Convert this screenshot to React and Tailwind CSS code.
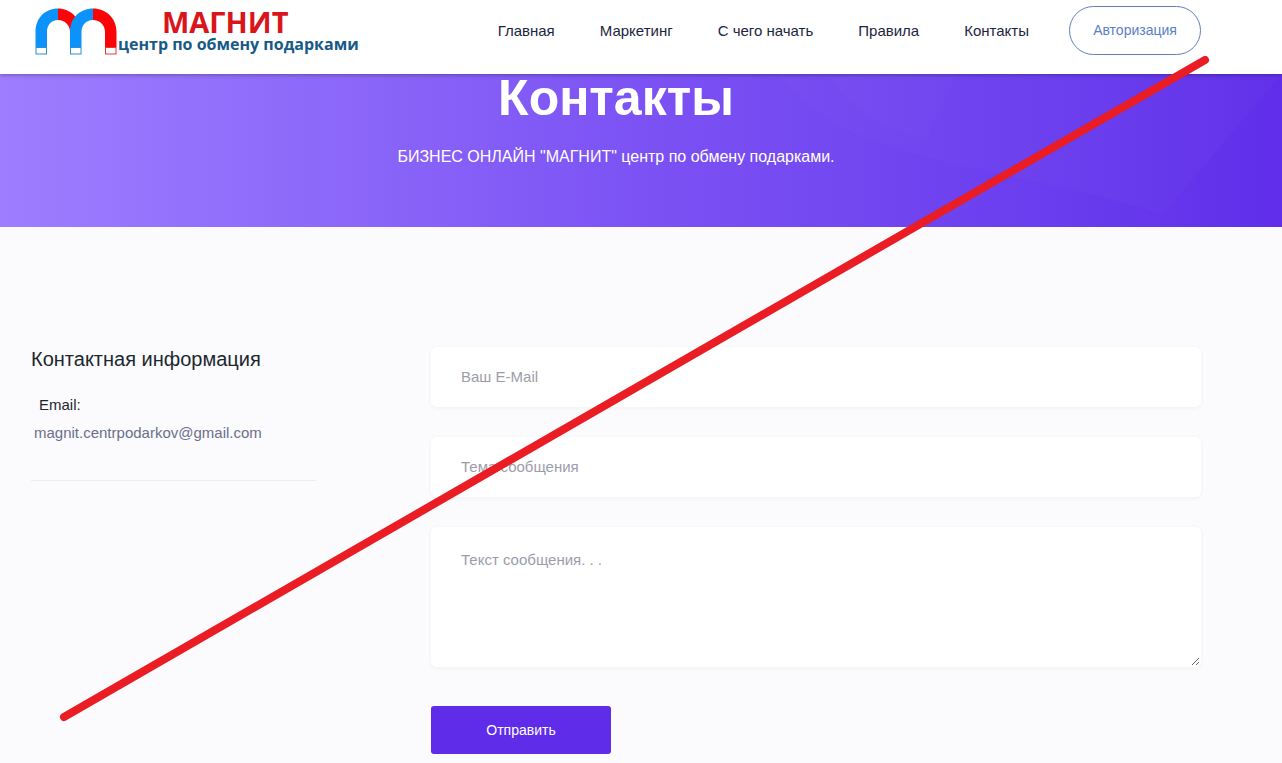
import React, { useState } from 'react'

const NAV_LINKS = [
  { label: 'Главная', href: '#home' },
  { label: 'Маркетинг', href: '#marketing' },
  { label: 'С чего начать', href: '#start' },
  { label: 'Правила', href: '#rules' },
  { label: 'Контакты', href: '#contacts' },
]

const fieldClass =
  'block w-full rounded-[5px] border border-white bg-white px-[29px] text-[15px] text-[#1d2b3a] placeholder-[#9c9dab] shadow-[0_1px_4px_rgba(40,40,90,0.05)] outline-none'

function MagnetLogo() {
  return (
    <svg viewBox="0 0 83 47" className="h-[47px] w-[83px] shrink-0" aria-hidden="true">
      {/* Left magnet */}
      <path d="M0.5 39V24C0.5 10 10 0.5 23 0.5V12C16 12 12 17 12 24V39Z" fill="#0c93fb" />
      <path d="M23 0.5C35 0.5 46 10 46 24H35C35 17 30 12 23 12Z" fill="#fb0407" />
      <rect x="1" y="39.5" width="10.5" height="6.5" fill="#fff" stroke="#2f8fd0" />
      {/* Right magnet */}
      <path d="M35 39V24C35 10 45 0.5 58 0.5V12C51 12 46.5 17 46.5 24V39Z" fill="#0c93fb" />
      <path d="M58 0.5C71 0.5 81.5 10 81.5 24V39H70V24C70 17 65 12 58 12Z" fill="#fb0407" />
      <rect x="35.5" y="39.5" width="10.5" height="6.5" fill="#fff" stroke="#2f8fd0" />
      <rect x="70.5" y="39.5" width="10.5" height="6.5" fill="#fff" stroke="#e03a3a" />
    </svg>
  )
}

function Header() {
  return (
    <header className="relative z-10 flex h-[74px] justify-between bg-white pl-[35px] pr-[81px] shadow-[0_1px_4px_rgba(0,0,0,0.3)]">
      <a href="#home" className="flex pt-2">
        <MagnetLogo />
        <span className="flex flex-col whitespace-nowrap font-['Open_Sans',sans-serif] font-bold">
          <span className="pl-11 text-[29px] leading-7 text-[#d9151b]">МАГНИТ</span>
          <span className="text-base leading-4 text-[#175987]">центр по обмену подарками</span>
        </span>
      </a>
      <div className="flex items-start gap-10 pt-[6px]">
        <nav className="flex h-[51px] items-center gap-[45px]">
          {NAV_LINKS.map((link) => (
            <a key={link.href} href={link.href} className="whitespace-nowrap text-[15px] text-[#1c2540]">
              {link.label}
            </a>
          ))}
        </nav>
        <button
          type="button"
          className="h-[49px] w-[132px] rounded-full border border-[#5f80b8] pb-0.5 text-sm text-[#5a80c8]"
        >
          Авторизация
        </button>
      </div>
    </header>
  )
}

function Banner() {
  return (
    <section className="relative h-[153px] bg-linear-to-r from-[#9f7dff] via-[#7c52f4] to-[#602eea] pl-[31px] pr-[81px] text-center text-white">
      {/* Faint background shapes */}
      <svg
        viewBox="0 0 520 153"
        preserveAspectRatio="none"
        className="absolute inset-y-0 right-0 h-full w-2/5"
        aria-hidden="true"
      >
        <path d="M10 0C50 50 100 70 190 90C260 105 330 120 400 140L520 0Z" fill="#fff" opacity="0.015" />
        <path d="M60 0Q90 50 160 65L190 0Z" fill="#fff" opacity="0.015" />
      </svg>
      <h1 className="relative text-[50px] font-bold leading-[48px]">Контакты</h1>
      <p className="relative mt-[23px] text-base">БИЗНЕС ОНЛАЙН "МАГНИТ" центр по обмену подарками.</p>
    </section>
  )
}

function ContactInfo() {
  return (
    <aside className="w-[285px] shrink-0 self-start border-b border-[#ececf1] pb-[33px]">
      <h2 className="text-xl leading-6 text-[#1d2730]">Контактная информация</h2>
      <p className="mt-5 pl-2 text-[15px] leading-7 text-[#1d2730]">Email:</p>
      <a href="mailto:magnit.centrpodarkov@gmail.com" className="block pl-[3px] text-[15px] leading-7 text-[#6a6f8b]">
        magnit.centrpodarkov@gmail.com
      </a>
    </aside>
  )
}

function ContactForm() {
  const [form, setForm] = useState({ email: '', subject: '', message: '' })

  const handleChange = (e) => {
    setForm({ ...form, [e.target.name]: e.target.value })
  }

  return (
    <form className="flex-1" onSubmit={(e) => e.preventDefault()}>
      <div className="flex flex-col gap-[30px]">
        <input
          type="email"
          name="email"
          aria-label="Ваш E-Mail"
          placeholder="Ваш E-Mail"
          value={form.email}
          onChange={handleChange}
          className={`h-[60px] pb-0.5 ${fieldClass}`}
        />
        <input
          type="text"
          name="subject"
          aria-label="Тема сообщения"
          placeholder="Тема сообщения"
          value={form.subject}
          onChange={handleChange}
          className={`h-[60px] pb-0.5 ${fieldClass}`}
        />
        <textarea
          name="message"
          aria-label="Текст сообщения"
          placeholder="Текст сообщения. . ."
          value={form.message}
          onChange={handleChange}
          className={`h-[140px] resize pt-5 leading-6 ${fieldClass}`}
        />
      </div>
      <button type="submit" className="mt-[39px] h-12 w-[180px] rounded-[3px] bg-[#5f2cea] text-sm text-white">
        Отправить
      </button>
    </form>
  )
}

export default function App() {
  return (
    <div className="relative min-h-screen bg-[#fbfbfd] font-['Liberation_Sans',Arial,sans-serif]">
      <Header />
      <Banner />
      <main className="flex gap-[115px] pl-[31px] pr-[81px] pt-[120px]">
        <ContactInfo />
        <ContactForm />
      </main>

      {/* Strike-through line */}
      <svg viewBox="0 0 1282 763" className="pointer-events-none absolute left-0 top-0 z-20 w-full" aria-hidden="true">
        <line x1="64" y1="717" x2="1205" y2="60" stroke="#ea1c24" strokeWidth="8" strokeLinecap="round" />
      </svg>
    </div>
  )
}
